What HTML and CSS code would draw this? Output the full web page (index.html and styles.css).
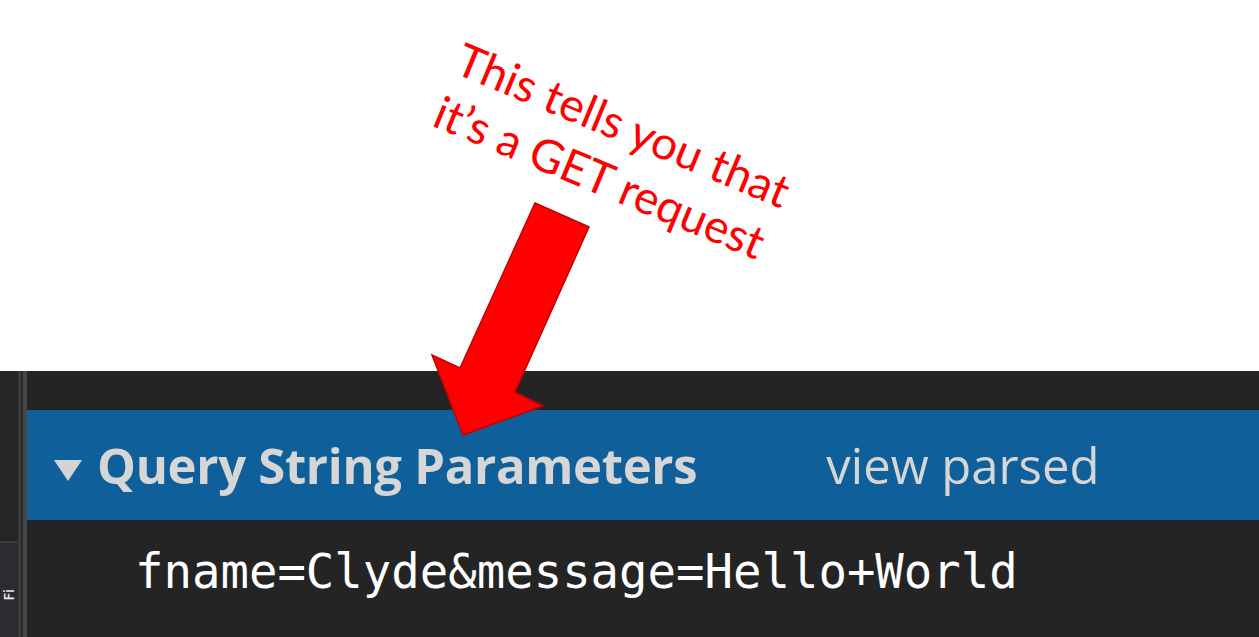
FILE: index.html
```html
<!DOCTYPE html>
<html>
<head>
<meta charset="utf-8">
<link rel="stylesheet" href="styles.css">
</head>
<body>
<div class="page">
  <div class="top"></div>
  <div class="devtools">
    <div class="side">
      <div class="side-upper"></div>
      <div class="side-lower"><span class="side-label">Fi</span></div>
    </div>
    <div class="divider"><div class="div-a"></div><div class="div-gap"></div><div class="div-b"></div></div>
    <div class="main">
      <div class="gapbar"></div>
      <div class="header">
        <span class="tri"></span>
        <span class="title">Query String Parameters</span>
        <span class="toggle">view parsed</span>
      </div>
      <div class="body">
        <div class="query">fname=Clyde&amp;message=Hello+World</div>
      </div>
    </div>
  </div>
  <div class="note">
    <div class="note-line">This tells you that</div>
    <div class="note-line">it’s a GET request</div>
  </div>
  <svg class="arrow" width="1259" height="637" viewBox="0 0 1259 637">
    <polygon points="535,203 589,227 515,392 543,406 463,435 432,355 460,368" fill="#ff0000" stroke="#c00000" stroke-width="1.5" stroke-linejoin="miter"/>
  </svg>
</div>
</body>
</html>
```
FILE: styles.css
```css
html, body {
  margin: 0;
  padding: 0;
  background: #ffffff;
}
.page {
  position: relative;
  width: 1259px;
  height: 637px;
  overflow: hidden;
  display: flex;
  flex-direction: column;
}
.top {
  height: 371px;
  flex: none;
  background: #ffffff;
}
.devtools {
  flex: 1;
  display: flex;
  background: #242424;
}
.side {
  width: 18px;
  display: flex;
  flex-direction: column;
}
.side-upper {
  height: 170px;
  background: #252526;
  border-bottom: 2px solid #3a3a3a;
}
.side-lower {
  flex: 1;
  background: #2b2c30;
  display: flex;
  flex-direction: column;
  align-items: center;
  padding-top: 46px;
}
.side-label {
  writing-mode: vertical-rl;
  transform: rotate(180deg);
  color: #e8e8e8;
  font-family: "Open Sans", sans-serif;
  font-size: 14px;
  line-height: 16px;
  font-weight: 600;
}
.divider {
  width: 9px;
  display: flex;
}
.div-a { width: 3px; background: #3a3a3a; }
.div-gap { width: 2px; background: #2a2a2a; }
.div-b { width: 4px; background: #474747; }
.main {
  flex: 1;
  display: flex;
  flex-direction: column;
}
.gapbar {
  height: 39px;
  background: #242424;
}
.header {
  height: 110px;
  background: #0e5f9a;
  display: flex;
  align-items: center;
  color: #d6d6d6;
  font-family: "Open Sans", sans-serif;
}
.tri {
  width: 0;
  height: 0;
  margin-left: 27px;
  margin-top: 10px;
  border-left: 14px solid transparent;
  border-right: 14px solid transparent;
  border-top: 21px solid #d4d4d4;
}
.title {
  margin-left: 15px;
  font-weight: 700;
  font-size: 49px;
  letter-spacing: -0.3px;
}
.toggle {
  margin-left: 129px;
  font-size: 49px;
  font-weight: 400;
}
.body {
  flex: 1;
  background: #242424;
}
.query {
  margin-top: 22px;
  margin-left: 108px;
  font-family: "DejaVu Sans Mono", monospace;
  font-size: 47.3px;
  color: #ffffff;
  line-height: 60px;
}
.note {
  position: absolute;
  left: 470px;
  top: 30px;
  transform: rotate(22.5deg);
  transform-origin: 0 0;
  color: #ff0000;
  font-family: Lato, sans-serif;
  font-size: 46px;
  line-height: 57px;
  white-space: nowrap;
}
.arrow {
  position: absolute;
  left: 0;
  top: 0;
}
```
